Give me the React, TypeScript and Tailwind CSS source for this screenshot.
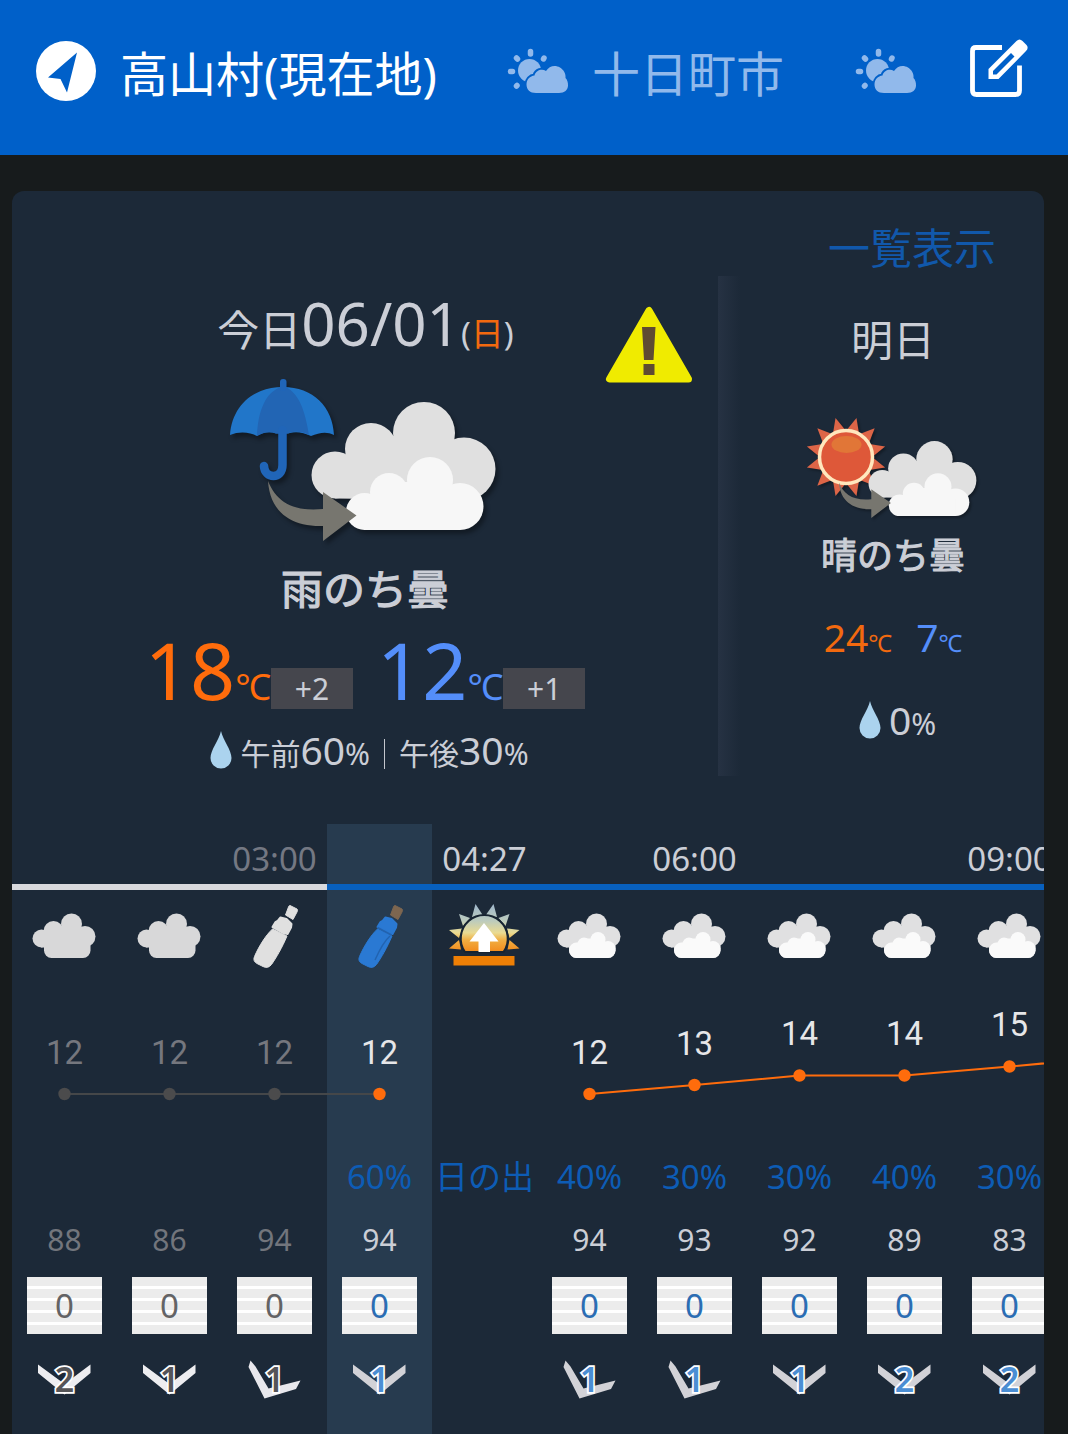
type Hour = {
  time?: string;
  past?: boolean;
  icon: "past-cloud" | "past-rain" | "rain" | "sunrise" | "cloud";
  temp?: number;
  y?: number;
  rain?: string;
  humidity?: number;
  wind?: number;
  tilted?: boolean;
};

const hours: Hour[] = [
  { past: true, icon: "past-cloud", temp: 12, y: 1094, humidity: 88, wind: 2 },
  { past: true, icon: "past-cloud", temp: 12, y: 1094, humidity: 86, wind: 1 },
  { past: true, icon: "past-rain", time: "03:00", temp: 12, y: 1094, humidity: 94, wind: 1, tilted: true },
  { icon: "rain", temp: 12, y: 1094, rain: "60%", humidity: 94, wind: 1 },
  { icon: "sunrise", time: "04:27", rain: "日の出" },
  { icon: "cloud", temp: 12, y: 1094, rain: "40%", humidity: 94, wind: 1, tilted: true },
  { icon: "cloud", time: "06:00", temp: 13, y: 1085, rain: "30%", humidity: 93, wind: 1, tilted: true },
  { icon: "cloud", temp: 14, y: 1075.5, rain: "30%", humidity: 92, wind: 1 },
  { icon: "cloud", temp: 14, y: 1075.5, rain: "40%", humidity: 89, wind: 2 },
  { icon: "cloud", time: "09:00", temp: 15, y: 1066.5, rain: "30%", humidity: 83, wind: 2 },
];

function LocationIcon() {
  return (
    <svg viewBox="36 41 60 60" className="w-[60px] h-[60px] shrink-0">
      <circle cx="66" cy="71" r="30" fill="#fff" />
      <path d="M77 52.5 48 77.5 60.5 79 67 92.5Z" fill="#0060c9" />
    </svg>
  );
}

function PartlyCloudyIcon() {
  return (
    <svg viewBox="507 48 62 46" className="w-[62px] h-[46px] shrink-0" fill="#91b9eb">
      <circle cx="529.500" cy="70.500" r="11.500" />
      <path
        d="M530.500 51.500V54M543.500 59 544 58M516.500 58 517.500 59M510.500 71.500H512.500M516.500 86 517 85.500"
        stroke="#91b9eb"
        strokeWidth="5.500"
        strokeLinecap="round"
      />
      <path
        d="M536 93C530 93 526.500 89.500 526.500 84.500C526.500 79.500 530 76 534.500 75.500C536 70 542 68.500 546 71C549 66 555 64.500 560 67.500C564 70 566 74 565.500 78C567.500 80 568 82.500 568 85.500C568 90 564.500 93 559 93Z"
        stroke="#0060c9"
        strokeWidth="4"
        paintOrder="stroke"
      />
    </svg>
  );
}

function EditIcon() {
  return (
    <svg viewBox="969 38 60 60" className="w-[60px] h-[60px] shrink-0">
      <path
        d="M1002 47.500H976Q972.500 47.500 972.500 51V90.500Q972.500 94.500 976.500 94.500H1015.500Q1019.500 94.500 1019.500 90.500V65.500"
        fill="none"
        stroke="#fff"
        strokeWidth="4.800"
      />
      <path
        fillRule="evenodd"
        d="M988.500 69 1016.500 41Q1019.500 38 1022.500 41L1026.500 45Q1029 48 1026 51L998.500 79H988.500ZM993 71V74.500H996.500L1014.500 56.500 1011 53Z"
        fill="#fff"
      />
    </svg>
  );
}

function Clouds() {
  return (
    <>
      <g fill="#e0e0e0">
        <circle cx="335" cy="475" r="23.500" />
        <circle cx="371" cy="449" r="26" />
        <circle cx="424" cy="433" r="31" />
        <circle cx="464" cy="469" r="31.500" />
        <path d="M335 498.500 360 450 380 438 393.500 436H424L452 441 470 470 462 500Z" />
      </g>
      <g fill="#f7f7f7">
        <circle cx="364.500" cy="511.500" r="18.500" />
        <circle cx="389" cy="492" r="19" />
        <circle cx="430" cy="480" r="23" />
        <circle cx="460" cy="506.500" r="23.500" />
        <path d="M364 530V500L389 482H440L460 500V530Z" />
      </g>
    </>
  );
}

function ThenArrow() {
  return (
    <path d="M268 481C276 501 292 512 323 509V492L356.500 515.500 323 541V526C291 527 270 512 268 481Z" fill="#77766f" />
  );
}

function RainThenCloudIcon() {
  return (
    <svg viewBox="225 375 280 172" className="w-[280px] h-[172px] drop-shadow-[3px_4px_2px_rgba(0,0,0,0.35)]">
      <path d="M230 435C232 407 252 387 283 387C313 387 333 407 334 435C326 431 319 433 311 436C303 432 295 431 288 433.500H276C270 431 263 432 257 436C250 432 239 431 230 435Z" fill="#2176c9" />
      <path d="M257 436C258 410 266 392 281 387H286C299 394 305 410 309 435C301 431 295 431 288 433.500H276C270 431 263 432 257 436Z" fill="#2265b4" />
      <rect x="280" y="379" width="6.500" height="12" rx="3" fill="#2065b8" />
      <path d="M282.500 430V465C282.500 480 264.500 479 264 466" fill="none" stroke="#2065b8" strokeWidth="8.500" strokeLinecap="round" />
      <Clouds />
      <ThenArrow />
    </svg>
  );
}

function SunThenCloudIcon() {
  return (
    <svg viewBox="803 412 180 112" className="w-[180px] h-[112px] drop-shadow-[2px_2px_1px_rgba(0,0,0,0.3)]">
      {Array.from({ length: 12 }, (_, i) => (
        <path key={i} d="M839.500 431 846 416.500 852.500 431Z" fill="#dd6547" transform={`rotate(${15 + i * 30} 846 457)`} />
      ))}
      <circle cx="846" cy="457" r="26.500" fill="#de5839" stroke="#ffe7bd" strokeWidth="3.500" />
      <ellipse cx="846.500" cy="444.500" rx="15" ry="8.500" fill="#e17637" />
      <g transform="translate(686 205.500) scale(0.586)">
        <Clouds />
      </g>
      <g transform="translate(682 201) scale(0.586)">
        <ThenArrow />
      </g>
    </svg>
  );
}

function WarningIcon() {
  return (
    <svg viewBox="604 305 90 80" className="w-[90px] h-[80px]">
      <path d="M649 310.500 609.500 379H688.500Z" fill="#f0eb00" stroke="#f0eb00" strokeWidth="7" strokeLinejoin="round" />
      <path d="M642 327H655.500L653.500 360H644ZM643.500 364H654.500V375H643.500Z" fill="#5f4b32" />
    </svg>
  );
}

function Drop() {
  return (
    <svg viewBox="0 0 22 38" className="w-[22px] h-[38px]">
      <path d="M11 0C13 9 21.500 19 21.500 27A10.500 10.500 0 0 1 .5 27C.5 19 9 9 11 0Z" fill="#abd3ee" />
    </svg>
  );
}

function HourIcon({ icon }: { icon: Hour["icon"] }) {
  return (
    <svg viewBox="12 900 105 72" className="w-[105px] h-[72px]">
      {(icon === "cloud" || icon === "past-cloud") && (
        <g fill={icon === "cloud" ? "#e0e0e1" : "#d8d8d9"}>
          <circle cx="41.500" cy="938.500" r="9" />
          <circle cx="53.500" cy="931" r="10" />
          <circle cx="71.500" cy="924" r="10.500" />
          <circle cx="85" cy="936.500" r="10.500" />
          <path d="M41 947.500 53 926H70L86 932 88 947Z" />
          <rect x="44" y="936" width="46.500" height="22" rx="7.500" />
        </g>
      )}
      {icon === "cloud" && (
        <g fill="#fafafa">
          <circle cx="59" cy="944" r="6.500" />
          <circle cx="73" cy="939.500" r="7.500" />
          <circle cx="83" cy="948.500" r="7.500" />
          <rect x="44" y="942.500" width="46.500" height="15.500" rx="7.500" />
          <path d="M58 938.500H74L80 945H56Z" />
        </g>
      )}
      {(icon === "rain" || icon === "past-rain") && (
        <g transform="translate(-210 0)" strokeWidth="2" strokeLinejoin="round">
          <path
            d="M290 905.500 297 909Q298 910 297 912L293 919.500 285.500 915 288.500 907Q289 905.500 290 905.500Z"
            fill={icon === "rain" ? "#7d6650" : "#e0e0e0"}
            stroke={icon === "rain" ? "#7d6650" : "#e0e0e0"}
            strokeWidth="1"
          />
          <path
            d="M272.500 929 287 936C282 948 276 958 271.500 964.500Q268 969 263 966.500L257 963.500Q252.500 961 254.500 956.500C259 946 266 935 272.500 929Z"
            fill={icon === "rain" ? "#2a79d3" : "#e0e0e0"}
            stroke={icon === "rain" ? "#2a79d3" : "#e0e0e0"}
            strokeWidth="1"
          />
          <path
            d="M280.500 917.500 286.500 919 291.500 924 291 927.500 287.500 934 283.500 933 272.500 927 275.500 922 278 920.500Z"
            fill={icon === "rain" ? "#2a79d3" : "#e0e0e0"}
            stroke={icon === "rain" ? "#2a79d3" : "#e0e0e0"}
          />
          {icon === "rain" && <path d="M272.500 927.500 286.500 935M285 936Q278 942 270 960" fill="none" stroke="#2263b0" strokeWidth="1.500" />}
        </g>
      )}
      {icon === "sunrise" && (
        <g transform="translate(-420 0)">
          <defs>
            <linearGradient id="dawn" gradientUnits="userSpaceOnUse" x1="0" y1="904" x2="0" y2="952">
              <stop offset="0" stopColor="#9fb7cc" />
              <stop offset="0.35" stopColor="#bccbbd" />
              <stop offset="0.6" stopColor="#eadb92" />
              <stop offset="0.75" stopColor="#f0ae42" />
              <stop offset="1" stopColor="#f38a1b" />
            </linearGradient>
          </defs>
          <path
            d="M475.500 904 483 915.500 472 917ZM493.500 904 497 917 485.500 915.500ZM459 914 470 918 463 926ZM509.500 914 505.500 926 498.500 918ZM449 930 462 928.500 459 938ZM519.500 930 509.500 938 507 928.500ZM449 948.500 459 940 461 949.500ZM519.500 948.500 507.500 949.500 509.500 940Z"
            fill="url(#dawn)"
          />
          <path d="M465 952A23.500 23.500 0 1 1 503.500 952Z" fill="url(#dawn)" stroke="#162331" strokeWidth="2" />
          <path d="M484 923 498.500 941.500H490V952H478.500V941.500H469.500Z" fill="#fff" />
          <rect x="453.500" y="956" width="61" height="9.500" fill="#ee7f05" />
        </g>
      )}
    </svg>
  );
}

function WindIcon({ hour }: { hour: Hour }) {
  if (!hour.wind) return null;
  return (
    <svg viewBox="12 1355 105 50" className="w-[105px] h-[50px]">
      {hour.tilted ? (
        <path
          d="M40.500 1360.500 45.500 1366.500 58.500 1388.500 90.500 1380.500 86 1389 54.500 1398.500 38.500 1367Z"
          fill={hour.past ? "#e8e8ed" : "#d2d2d7"}
        />
      ) : (
        <path
          d="M38 1364.500 64.500 1384 90.500 1364.500V1373L64.500 1394.500 38 1373Z"
          fill={hour.past ? "#ededf0" : "#d2d2d7"}
        />
      )}
      <text
        x="64.500"
        y="1392"
        textAnchor="middle"
        fontSize="34"
        fontWeight="600"
        fill={hour.past ? "#555558" : "#4b8ed3"}
        stroke="#fff"
        strokeWidth="3.500"
        paintOrder="stroke"
      >
        {hour.wind}
      </text>
    </svg>
  );
}

function TempChart() {
  const x = (i: number) => 52.5 + i * 105;
  return (
    <svg viewBox="0 1000 1032 110" className="w-[1032px] h-[110px] block">
      <path d="M52.500 1094H367.500" stroke="#454749" strokeWidth="2" />
      <path d="M577.500 1094 682.500 1085 787.500 1075.500H892.500L997.500 1066.500 1102.500 1057" fill="none" stroke="#ff6c0c" strokeWidth="2" />
      {hours.map((h, i) =>
        h.y ? (
          <g key={i}>
            <circle cx={x(i)} cy={h.y} r="6.200" fill={h.past ? "#4b4b4c" : "#ff6c0c"} />
            <text
              x={x(i)}
              y={h.y - 30.5}
              textAnchor="middle"
              fontSize="33"
              fontFamily="Roboto"
              fill={h.past ? "#75777e" : "#e6e6e8"}
            >
              {h.temp}
            </text>
          </g>
        ) : null
      )}
    </svg>
  );
}

export default function App() {
  return (
    <div className="w-[1068px] h-[1434px] overflow-hidden bg-[#171b1c] text-[#cbced6] whitespace-nowrap font-['Noto_Sans','Noto_Sans_CJK_JP',sans-serif]">
      {/* Locations */}
      <header className="h-[155px] bg-[#0060c9] flex pt-[38px] pl-9">
        <div className="flex items-center h-[66px] text-5xl leading-none text-white">
          <LocationIcon />
          <span className="ml-6 pt-[5px] w-[318px]">高山村(現在地)</span>
        </div>
        <div className="flex items-center h-[66px] ml-[69px] text-5xl leading-none text-[#91b9eb]">
          <PartlyCloudyIcon />
          <span className="ml-[23px] pt-[5px]">十日町市</span>
        </div>
        <div className="flex items-center h-[66px] ml-[71px]">
          <PartlyCloudyIcon />
        </div>
        <div className="ml-[52px]">
          <EditIcon />
        </div>
      </header>

      <main className="mt-9 ml-3 w-[1032px] h-[1243px] bg-[#1c2938] rounded-t-xl overflow-hidden">
        <div className="h-[85px] pt-9 pr-12 text-right text-[42px] leading-[42px] text-[#1158ab]">一覧表示</div>

        <div className="flex h-[548px]">
          {/* Today */}
          <section className="w-[706px] relative flex flex-col items-center">
            <div className="absolute right-[24px] top-[29px]">
              <WarningIcon />
            </div>
            <div className="flex items-baseline h-[99px] pt-[17px] pl-px leading-none">
              <span className="text-[42px]">今日</span>
              <span className="text-[60px]">06/01</span>
              <span className="text-[33px]">
                (<span className="text-[#f2690f]">日</span>)
              </span>
            </div>
            <RainThenCloudIcon />
            <div className="mt-[21px] text-[42px] leading-[42px] [-webkit-text-stroke:1.2px]">雨のち曇</div>
            <div className="flex h-[87px] mt-[15px] leading-[90px]">
              <div className="flex items-baseline text-[#ff6c0c]">
                <span className="text-[79px]">18</span>
                <span className="text-4xl leading-none">℃</span>
              </div>
              <div className="w-[82px] h-[41px] mt-[43px] mr-[24px] bg-[#45464d] text-[#cbced6] text-[30px] leading-[41px] text-center">+2</div>
              <div className="flex items-baseline text-[#548efa]">
                <span className="text-[79px]">12</span>
                <span className="text-4xl leading-none">℃</span>
              </div>
              <div className="w-[82px] h-[41px] mt-[43px] bg-[#45464d] text-[#cbced6] text-[30px] leading-[41px] text-center">+1</div>
            </div>
            <div className="flex h-[50px] mt-[16px] pl-[9px]">
              <div className="mt-[3px] mr-[8px]">
                <Drop />
              </div>
              <div className="flex items-baseline leading-[44px] text-[30px]">
                <span>午前</span>
                <span className="text-[39px]">60</span>
                <span>%</span>
                <span className="w-px h-[30px] mx-[14px] self-start mt-[11px] bg-[#c3c6cd]" />
                <span>午後</span>
                <span className="text-[39px]">30</span>
                <span>%</span>
              </div>
            </div>
          </section>

          <div className="w-[22px] h-[500px] bg-linear-to-r from-[#263243] to-[#1c2938]" />

          {/* Tomorrow */}
          <section className="w-[304px] flex flex-col items-center">
            <div className="mt-[43px] text-[42px] leading-[42px] pl-[2px]">明日</div>
            <div className="mt-[51px] pl-[2px]">
              <SunThenCloudIcon />
            </div>
            <div className="mt-[14px] text-4xl leading-9 [-webkit-text-stroke:1px] pl-[2px]">晴のち曇</div>
            <div className="flex gap-6 mt-[38px] pl-[2px] leading-[50px]">
              <div className="flex items-baseline text-[#f2690f]">
                <span className="text-[39px]">24</span>
                <span className="text-2xl leading-none">℃</span>
              </div>
              <div className="flex items-baseline text-[#548efa]">
                <span className="text-[39px]">7</span>
                <span className="text-2xl leading-none">℃</span>
              </div>
            </div>
            <div className="flex mt-[36px] pl-[11px]">
              <div className="pt-[3px]">
                <Drop />
              </div>
              <div className="flex items-baseline leading-[44px] ml-[8px]">
                <span className="text-[39px]">0</span>
                <span className="text-[30px]">%</span>
              </div>
            </div>
          </section>
        </div>

        {/* Hourly */}
        <section className="relative h-[610px]">
          <div className="absolute left-[315px] top-0 w-[105px] h-full bg-[#273b4f]" />
          <div className="relative w-[1050px]">
            <div className="grid grid-cols-10 h-[60px] text-[33px] leading-[70px] text-center">
              {hours.map((h, i) => (
                <div key={i} className={h.past ? "text-[#747883]" : ""}>
                  {h.time}
                </div>
              ))}
            </div>
            <div className="flex h-[6px]">
              <div className="w-[315px] bg-[#d8d9dd]" />
              <div className="flex-1 bg-[#0860be]" />
            </div>
            <div className="grid grid-cols-10 h-[110px] pt-[10px]">
              {hours.map((h, i) => (
                <HourIcon key={i} icon={h.icon} />
              ))}
            </div>
            <TempChart />
            <div className="grid grid-cols-10 mt-[43px] h-[48px] text-[33px] leading-[48px] text-center text-[#0d5cb5]">
              {hours.map((h, i) => (
                <div key={i}>{h.rain}</div>
              ))}
            </div>
            <div className="grid grid-cols-10 mt-[19px] h-[40px] text-[30px] leading-[40px] text-center">
              {hours.map((h, i) => (
                <div key={i} className={h.past ? "text-[#72757c]" : ""}>
                  {h.humidity}
                </div>
              ))}
            </div>
            <div className="grid grid-cols-10 mt-[17px] h-[57px]">
              {hours.map((h, i) => (
                <div key={i} className="flex justify-center">
                  {h.wind && (
                    <div
                      className={`w-[75px] h-[57px] text-[33px] leading-[57px] text-center bg-[repeating-linear-gradient(#ececec_0_9px,#fff_9px_12px)] ${
                        h.past ? "text-[#636365]" : "text-[#2b6db3]"
                      }`}
                    >
                      0
                    </div>
                  )}
                </div>
              ))}
            </div>
            <div className="grid grid-cols-10 mt-[21px]">
              {hours.map((h, i) => (
                <div key={i}>
                  <WindIcon hour={h} />
                </div>
              ))}
            </div>
          </div>
        </section>
      </main>
    </div>
  );
}
